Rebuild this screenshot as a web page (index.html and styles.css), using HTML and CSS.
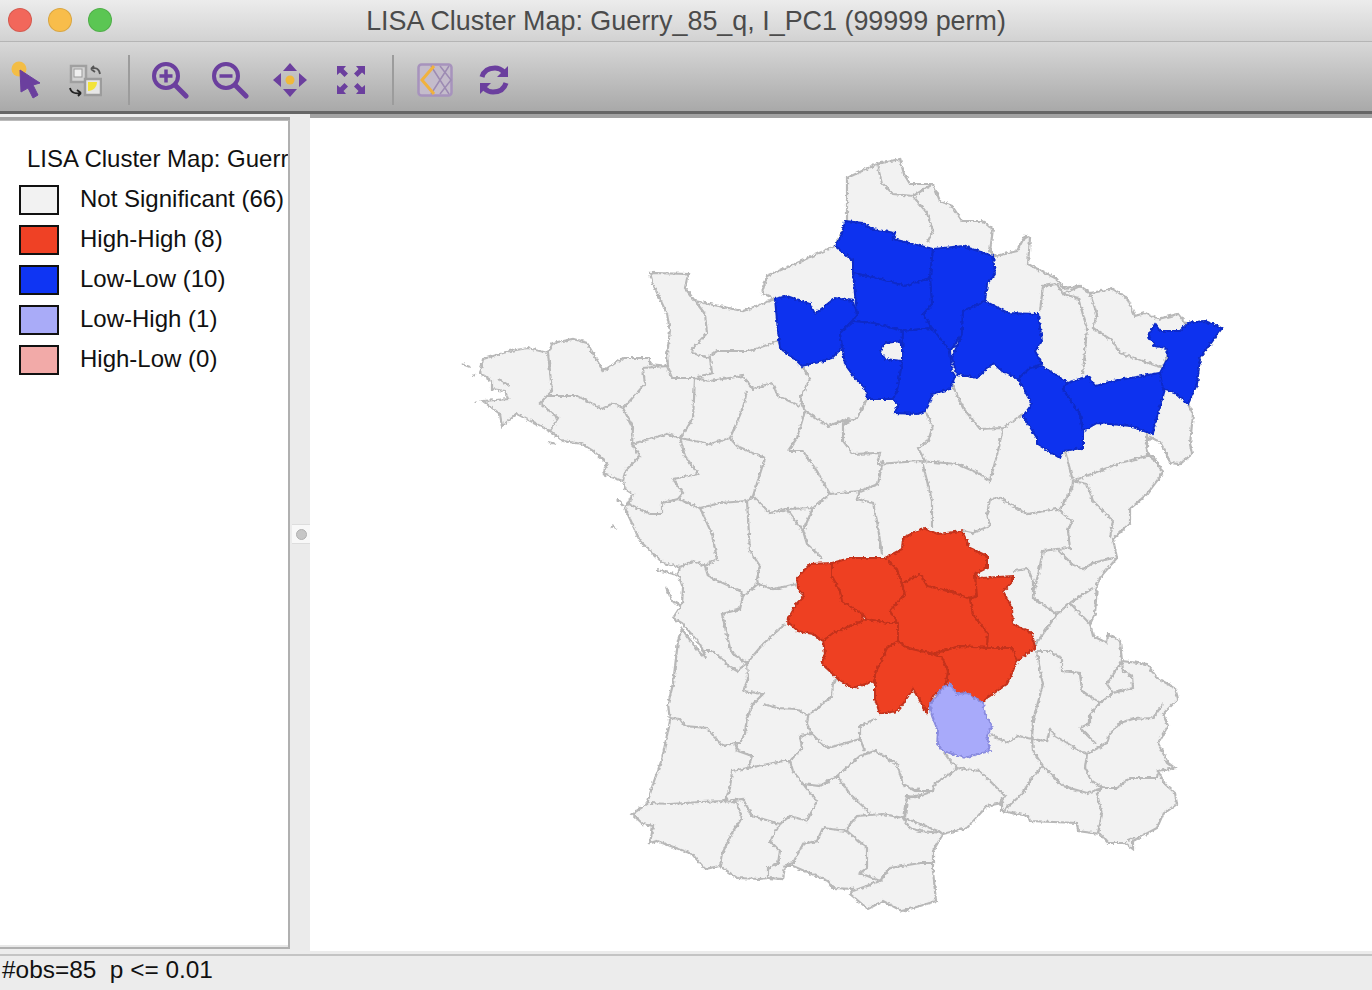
FILE: index.html
```html
<!DOCTYPE html>
<html lang="en">
<head>
  <meta charset="UTF-8">
  <title>LISA Cluster Map</title>
  <link rel="stylesheet" href="styles.css">
</head>
<body>
  <div class="window">

    <div class="titlebar">
      <div class="lights">
        <span class="light red"></span>
        <span class="light yellow"></span>
        <span class="light green"></span>
      </div>
      <div class="title">LISA Cluster Map: Guerry_85_q, I_PC1 (99999 perm)</div>
    </div>

    <div class="toolbar">
      <!-- select -->
      <svg class="tool tool-select" viewBox="0 0 32 40">
        <circle cx="8" cy="9" r="7.500" fill="#f3bd45"/>
        <path d="M9 10 L29 23 L22 25 L27 35 L22 38 L17 28 L10 32 Z" fill="#6b3f9e" stroke="#6b3f9e" stroke-linejoin="round"/>
      </svg>
      <!-- swap -->
      <svg class="tool tool-swap" viewBox="0 0 34 34">
        <rect x="3" y="2" width="15" height="16" fill="#d4d4d4" stroke="#a0a0a0" stroke-width="2.500"/>
        <rect x="6" y="5" width="8" height="8" fill="#efefef" stroke="#999"/>
        <rect x="17" y="15" width="16" height="16" fill="#e6e6e6" stroke="#9c9c9c" stroke-width="2.500"/>
        <path d="M20 27 V18 H29 C29 23 25 27 20 27 Z" fill="#f2e33a"/>
        <path d="M23 5 C27 3 31 4 32 10 M23 5 L26 2 M23 5 L27 8" fill="none" stroke="#555" stroke-width="1.800"/>
        <path d="M2 24 C3 29 8 30 13 29 M13 29 L9 26 M13 29 L10 32" fill="none" stroke="#222" stroke-width="1.800"/>
      </svg>

      <span class="sep sep-a"></span>

      <!-- zoom in -->
      <svg class="tool tool-zoom-in" viewBox="0 0 38 38">
        <circle cx="15" cy="15" r="12" fill="none" stroke="#6b3f9e" stroke-width="4"/>
        <path d="M24 24 L35 35" stroke="#6b3f9e" stroke-width="5" stroke-linecap="round"/>
        <path d="M8.500 15 H21.500 M15 8.500 V21.500" stroke="#6b3f9e" stroke-width="3.500"/>
      </svg>
      <!-- zoom out -->
      <svg class="tool tool-zoom-out" viewBox="0 0 38 38">
        <circle cx="15" cy="15" r="12" fill="none" stroke="#6b3f9e" stroke-width="4"/>
        <path d="M24 24 L35 35" stroke="#6b3f9e" stroke-width="5" stroke-linecap="round"/>
        <path d="M8.500 15 H21.500" stroke="#6b3f9e" stroke-width="3.500"/>
      </svg>
      <!-- pan -->
      <svg class="tool tool-pan" viewBox="0 0 36 36">
        <circle cx="18" cy="18" r="4.500" fill="#f0b93a"/>
        <path d="M18 1 L25 9 H11 Z M18 35 L25 27 H11 Z M1 18 L9 11 V25 Z M35 18 L27 11 V25 Z" fill="#6b3f9e"/>
      </svg>
      <!-- full extent -->
      <svg class="tool tool-fit" viewBox="0 0 30 30">
        <path d="M1 1 H10 L7.500 4 L12 8.500 L8.500 12 L4 7.500 L1 10 Z M29 1 H20 L22.500 4 L18 8.500 L21.500 12 L26 7.500 L29 10 Z M1 29 H10 L7.500 26 L12 21.500 L8.500 18 L4 22.500 L1 20 Z M29 29 H20 L22.500 26 L18 21.500 L21.500 18 L26 22.500 L29 20 Z" fill="#6b3f9e"/>
      </svg>

      <span class="sep sep-b"></span>

      <!-- base map -->
      <svg class="tool tool-map" viewBox="0 0 36 34">
        <rect x="1.500" y="1.500" width="33" height="31" rx="3" fill="#c4bccb" stroke="#a793bd" stroke-width="2.500"/>
        <path d="M14 3 L32 31 M32 3 L14 31 M23 3 L34 17 L23 31" fill="none" stroke="#9d8bb3" stroke-width="1.500"/>
        <path d="M17 3 L5 17 L17 31" fill="none" stroke="#f0b23e" stroke-width="3"/>
      </svg>
      <!-- refresh -->
      <svg class="tool tool-refresh" viewBox="0 0 32 32">
        <path d="M4 13 C6 6 12 4 17 4 C21 4 24 6 26 8" fill="none" stroke="#6b3f9e" stroke-width="5"/>
        <path d="M30 2 V13 H19 Z" fill="#6b3f9e"/>
        <path d="M28 19 C26 26 20 28 15 28 C11 28 8 26 6 24" fill="none" stroke="#6b3f9e" stroke-width="5"/>
        <path d="M2 30 V19 H13 Z" fill="#6b3f9e"/>
      </svg>
    </div>

    <div class="content">
      <div class="legend">
        <div class="legend-title">LISA Cluster Map: Guerr</div>
        <div class="legend-row"><span class="swatch sw-ns"></span>Not Significant (66)</div>
        <div class="legend-row"><span class="swatch sw-hh"></span>High-High (8)</div>
        <div class="legend-row"><span class="swatch sw-ll"></span>Low-Low (10)</div>
        <div class="legend-row"><span class="swatch sw-lh"></span>Low-High (1)</div>
        <div class="legend-row"><span class="swatch sw-hl"></span>High-Low (0)</div>
      </div>

      <div class="sash"><span class="sash-grip"><span class="sash-knob"></span></span></div>

      <div class="map">
        <svg class="map-svg" viewBox="310 117 1062 833">
          <defs>
            <filter id="rough" filterUnits="userSpaceOnUse" x="310" y="117" width="1062" height="833">
              <feTurbulence type="fractalNoise" baseFrequency="0.32" numOctaves="2" seed="4" result="noise"/>
              <feDisplacementMap in="SourceGraphic" in2="noise" scale="4" xChannelSelector="R" yChannelSelector="G"/>
              <feGaussianBlur stdDeviation="0.350"/>
            </filter>
          </defs>
          <g filter="url(#rough)">
            <!-- outline of the country -->
            <path class="land" d="M900,158 904,173 910,183 933,183 940,200 952,205 962,220 982,220 993,228 990,250 995,255 1017,250 1025,235 1030,237 1028,263 1057,278 1063,287 1080,285 1090,292 1113,288 1127,297 1135,315 1145,312 1158,318 1178,313 1185,322 1205,320 1222,327 1200,357 1197,383 1188,403 1193,413 1190,443 1192,453 1180,463 1170,462 1166,452 1160,441 1150,436 1146,445 1150,456 1158,462 1163,472 1147,493 1130,508 1130,522 1113,538 1117,557 1103,573 1097,583 1095,613 1090,623 1093,635 1107,642 1108,633 1120,640 1122,660 1147,663 1157,677 1175,687 1178,698 1163,713 1168,725 1158,742 1168,762 1175,767 1158,770 1165,783 1175,792 1177,803 1163,813 1157,827 1133,840 1133,848 1125,842 1108,842 1100,833 1078,830 1077,822 1030,820 1028,815 1002,810 1002,802 987,805 967,827 943,833 933,850 933,870 936,900 920,905 902,910 883,900 868,908 850,893 853,888 833,887 828,880 793,865 785,865 783,878 768,877 760,878 737,877 720,865 705,868 692,853 657,840 650,842 653,825 643,823 632,813 647,803 653,783 662,758 670,720 668,703 673,683 678,640 682,628 699,651 706,657 700,643 682,622 673,617 682,603 683,587 678,573 680,566 663,562 640,540 625,507 633,493 625,488 623,480 603,473 607,462 593,450 582,443 563,440 550,430 517,413 502,425 500,413 483,400 508,398 505,390 492,388 492,380 480,372 483,358 510,350 528,347 548,352 553,342 573,338 587,342 603,370 623,357 650,357 650,363 668,365 667,353 670,330 667,313 653,283 650,272 688,273 685,287 695,300 743,310 775,298 762,292 767,275 797,262 835,245 847,220 847,177 877,163 Z"/>
            <!-- islands -->
            <path class="borders" d="M462,363 470,366 M473,373 475,375 M475,400 476,401 M548,441 556,443 M612,525 616,528 M657,569 678,574 M666,586 672,600 680,604 M617,498 623,505 M498,378 510,385 M1128,839 1135,836"/>
            <!-- departement borders -->
            <path class="borders" d="M695,300 705,313 707,332 693,347 692,352 710,357 712,372 695,377 672,377 667,365
              M710,355 717,350 750,350 778,340
              M695,377 710,380 743,375 753,388 772,382 778,395 800,405
              M802,365 810,378 800,397 805,410 797,437 788,450
              M805,410 828,425 850,417 843,423 843,440 853,453 880,452 877,463
              M867,398 857,417 843,423
              M695,377 693,417 687,427 680,437 685,455 698,473 673,478 683,492 678,498 662,502 662,513 650,513 627,502
              M747,390 743,407 730,437 737,445 765,457
              M680,437 710,443 730,437
              M667,365 643,367 645,383 627,403 623,407 633,427 632,443 667,433 680,437
              M632,443 640,455 625,470 623,480
              M623,407 613,402 602,408 578,395 547,395 540,402 558,417 550,430
              M548,352 552,390 547,395
              M765,457 753,495 747,500 720,502 700,507 678,498
              M700,507 712,533 717,558 705,565 693,560 680,566
              M747,500 750,550 760,565 757,578 758,583
              M705,565 708,575 740,590 743,595 758,583 773,588 797,583
              M743,595 740,608 722,613 730,647 733,653 747,662 763,643 785,623
              M705,650 712,650 722,657 728,665 737,670 747,662 748,678 743,690 763,693 753,703 747,717 745,732 740,742 735,742 722,745 707,727 685,725 680,718 670,717
              M738,750 752,755 748,767 732,770 730,787 725,800 700,801 670,803 650,802
              M735,742 738,750
              M763,703 777,707 797,708 808,715 832,695 833,682 838,678
              M808,715 807,723 812,733 822,743 828,747 860,738 860,725 877,717
              M812,733 800,735 802,747 790,760 793,770 803,783 820,785 837,775 860,755 875,750 897,763 903,783 915,790 920,787
              M860,738 865,750
              M748,767 783,760 790,760
              M803,783 817,800 807,820 790,815 780,823 752,815 743,798 725,800
              M725,800 737,802 742,817 733,830 722,853 720,865
              M780,823 770,840 780,850 778,862 768,867 768,877
              M783,865 793,862 803,843 817,840 823,827 847,830 850,823 857,815 883,813 903,817
              M847,830 867,847 867,867 860,872 880,880 853,890
              M880,880 890,867 920,862 933,862
              M837,775 850,793 870,812
              M903,817 907,795 920,797
              M903,817 910,827 920,830 943,832
              M900,773 903,783 917,790 933,790 935,782 950,773 957,767 948,757 943,750
              M933,790 925,793 907,797 905,817 920,823 943,832
              M957,767 980,770 1005,795 1000,802
              M990,733 1007,742 1018,735 1032,738 1033,750 1043,765 1032,777 1022,793 1003,810
              M1043,765 1063,785 1087,792 1102,787 1097,793 1102,813 1098,833
              M1032,738 1047,740 1050,728 1055,735 1080,750 1087,753 1085,767 1092,780 1103,787 1117,787 1130,777 1157,777 1158,770
              M1087,753 1107,742 1110,733 1120,722 1133,718 1153,717 1163,703
              M1032,738 1033,720 1043,683 1040,670 1037,650
              M1037,650 1050,650 1062,658 1062,670 1080,672 1082,690 1100,702 1090,713 1090,722 1080,727 1095,742
              M1100,702 1113,692 1133,687 1132,675 1123,670 1122,660 1107,683 1113,692
              M1033,647 1057,613 1033,597 1043,550 1057,548 1072,563 1083,568 1093,562 1113,557
              M1057,613 1070,602 1093,587 M1070,602 1090,623
              M1013,570 1028,568 1033,580 1033,597
              M753,495 770,512 787,508 803,530 807,543 822,557
              M787,508 813,507 830,493 817,470 803,450 788,450
              M803,530 813,507
              M830,493 860,490 857,498 873,502 877,520 882,553
              M860,490 878,483 883,460
              M877,463 920,460 957,463 980,473 990,480 998,450 1003,427
              M922,460 932,500 932,527
              M963,530 972,532 990,525 987,513 990,498 1000,497 1027,513 1057,508 1072,520 1068,530 1070,547 1057,548
              M1060,508 1072,488 1073,480 1087,483 1093,500 1113,520 1110,537
              M1073,480 1065,450 1062,430
              M1073,480 1120,462 1147,455 1147,433
              M1147,455 1153,455 1163,472
              M877,163 882,182 893,193 913,195 927,212 933,230 927,242
              M913,195 933,183
              M1040,310 1043,285 1057,283 1063,293 1078,297 1087,327 1083,373
              M1063,293 1080,285
              M1090,293 1097,313 1093,327 1113,340 1120,352 1163,367 1168,353
              M1023,413 1003,427 980,428 963,407 952,383
              M925,410 933,425 928,440 918,447 925,460"/>

            <!-- Low-Low -->
            <g class="ll">
              <path d="M845,220 863,222 872,228 895,232 893,238 913,243 933,248 930,277 905,285 877,277 853,272 853,260 835,245 842,233 Z"/>
              <path d="M933,248 963,245 993,255 995,273 987,283 985,300 963,310 962,333 950,350 933,330 923,313 932,303 930,277 Z"/>
              <path d="M853,272 877,277 905,285 930,277 932,303 923,313 932,327 903,330 873,322 853,320 857,313 Z"/>
              <path d="M775,298 787,295 810,303 815,313 835,297 853,300 857,313 852,320 840,332 842,347 832,357 823,360 802,365 797,360 780,347 778,330 Z"/>
              <path fill-rule="evenodd" d="M840,332 853,320 873,322 903,330 902,363 897,390 893,398 868,398 865,387 855,377 845,363 843,350 Z M880,350 885,342 902,340 902,360 885,358 Z"/>
              <path d="M903,330 932,327 950,350 952,370 955,375 950,388 932,393 928,405 925,410 918,413 895,412 898,403 893,398 897,390 902,363 Z"/>
              <path d="M963,310 985,300 1008,312 1038,313 1042,340 1035,350 1042,363 1030,367 1018,378 1002,370 993,362 977,377 957,373 952,357 962,333 Z"/>
              <path d="M1042,365 1068,382 1063,388 1080,413 1083,430 1083,447 1063,450 1060,457 1037,443 1037,437 1023,415 1032,403 1018,378 1030,367 Z"/>
              <path d="M1068,382 1088,375 1095,385 1113,380 1160,372 1165,388 1155,423 1152,433 1130,425 1110,423 1097,422 1083,430 1080,413 1063,388 Z"/>
              <path d="M1155,323 1160,330 1180,330 1188,322 1205,320 1222,327 1200,357 1197,383 1188,403 1177,393 1163,388 1160,372 1168,357 1167,347 1155,345 1148,335 Z"/>
            </g>

            <!-- High-High -->
            <g class="hh">
              <path d="M797,577 810,563 832,562 832,575 840,590 842,600 862,613 863,620 833,632 823,640 813,633 798,630 787,620 797,602 804,595 798,588 Z"/>
              <path d="M832,562 850,557 885,557 895,563 902,583 905,593 890,610 898,622 887,622 867,618 862,613 842,600 840,590 832,575 Z"/>
              <path d="M823,640 833,632 867,618 887,622 898,622 898,640 908,647 887,647 875,673 875,680 853,687 838,678 822,663 825,652 Z"/>
              <path d="M885,557 902,548 903,537 923,527 938,533 962,530 970,547 987,555 987,567 975,573 977,595 967,597 955,592 927,585 920,573 902,583 897,568 Z"/>
              <path d="M902,583 920,573 927,585 955,592 970,598 973,613 988,633 987,647 960,645 933,653 908,647 898,640 898,622 890,610 905,593 Z"/>
              <path d="M975,573 982,577 1013,575 1013,580 1003,590 1012,607 1013,623 1032,632 1035,647 1017,660 1012,647 987,647 988,633 973,613 970,598 977,595 Z"/>
              <path d="M933,653 960,645 987,647 1012,647 1017,660 1010,677 1007,683 987,697 983,702 967,692 957,693 950,683 945,687 948,670 942,657 Z"/>
              <path d="M898,640 908,647 933,653 942,657 948,670 945,687 933,695 930,703 927,712 913,688 903,703 897,710 880,713 875,698 875,673 887,647 Z"/>
            </g>

            <!-- Low-High -->
            <path class="lh" d="M950,683 957,693 967,692 983,702 985,713 992,725 987,735 990,750 978,753 965,757 943,750 937,743 938,730 932,715 930,703 943,687 Z"/>
          </g>
        </svg>
      </div>
    </div>

    <div class="statusbar">#obs=85&nbsp;&nbsp;p &lt;= 0.01</div>
  </div>
</body>
</html>
```

FILE: styles.css
```css
/* General */
html, body {
  margin: 0;
  padding: 0;
  height: 100%;
  overflow: hidden;
  background-color: #ececec;
}

body {
  font-family: 'Liberation Sans', Arial, sans-serif;
  color: #111;
}

.window {
  display: flex;
  flex-direction: column;
  height: 990px;
}

/* Title bar */
.titlebar {
  position: relative;
  display: flex;
  align-items: center;
  justify-content: center;
  height: 41px;
  flex: none;
  background: linear-gradient(#ececec, #d2d2d2);
  border-bottom: 1px solid #b5b5b5;
}

.lights {
  position: absolute;
  left: 8px;
  top: 8px;
  display: flex;
  gap: 16px;
}

.light {
  width: 22px;
  height: 22px;
  border-radius: 50%;
  border: 1px solid rgba(0, 0, 0, 0.12);
}

.light.red { background-color: #f2675b; }
.light.yellow { background-color: #f8bd4b; }
.light.green { background-color: #5bc653; }

.title {
  margin-top: 2px;
  font-size: 26.900px;
  color: #4b4b4b;
}

/* Toolbar */
.toolbar {
  position: relative;
  height: 69px;
  flex: none;
  background: linear-gradient(#d8d8d8, #a9a9a9);
  border-bottom: 3px solid #666;
}

.tool {
  position: absolute;
  filter: blur(0.5px);
}

.tool-select { left: 11px; top: 18px; width: 32px; height: 40px; }
.tool-swap { left: 68px; top: 22px; width: 34px; height: 34px; }
.tool-zoom-in { left: 151px; top: 19px; width: 38px; height: 38px; }
.tool-zoom-out { left: 211px; top: 19px; width: 38px; height: 38px; }
.tool-pan { left: 272px; top: 20px; width: 36px; height: 36px; }
.tool-fit { left: 336px; top: 23px; width: 30px; height: 30px; }
.tool-map { left: 417px; top: 21px; width: 36px; height: 34px; }
.tool-refresh { left: 478px; top: 22px; width: 32px; height: 32px; }

.sep {
  position: absolute;
  top: 13px;
  width: 2px;
  height: 50px;
  background-color: #9c9c9c;
}

.sep-a { left: 128px; }
.sep-b { left: 392px; }

/* Main area */
.content {
  display: flex;
  flex: 1;
  min-height: 0;
  background-color: #ececec;
}

.legend {
  width: 290px;
  height: 829px;
  margin-top: 6px;
  padding-top: 18px;
  box-sizing: border-box;
  flex: none;
  overflow: hidden;
  white-space: nowrap;
  background-color: #fff;
  box-shadow: 0 -3px 0 #a3a3a3, 0 -2px 0 #e8e8e8 inset;
  border-right: 2px solid #b0b0b0;
  border-bottom: 2px solid #b0b0b0;
  border-top: 1px solid #bbb;
  font-size: 24px;
}

.legend-title {
  height: 40px;
  line-height: 40px;
  padding-left: 27px;
}

.legend-row {
  display: flex;
  align-items: center;
  height: 40px;
  padding-left: 19px;
}

.swatch {
  width: 36px;
  height: 26px;
  margin-top: 2px;
  margin-right: 21px;
  border: 2px solid #111;
  flex: none;
}

.sw-ns { background-color: #f2f2f2; }
.sw-hh { background-color: #ef4125; }
.sw-ll { background-color: #0f35f3; }
.sw-lh { background-color: #a9abf8; }
.sw-hl { background-color: #f2aaa8; }

.sash {
  position: relative;
  width: 20px;
  flex: none;
  background-color: #ebebeb;
}

.sash-grip {
  position: absolute;
  left: 2px;
  top: 410px;
  width: 18px;
  height: 18px;
  display: flex;
  align-items: center;
  justify-content: center;
  background-color: #f8f8f8;
  border-top: 1px solid #ddd;
  border-bottom: 1px solid #ddd;
}

.sash-knob {
  width: 11px;
  height: 11px;
  border-radius: 50%;
  background-color: #c6c6c6;
  border: 1px solid #b0b0b0;
  box-sizing: border-box;
}

.map {
  flex: 1;
  height: 837px;
  border-top: 4px solid #a3a3a3;
  box-sizing: border-box;
  background-color: #fff;
}

.map-svg {
  display: block;
  width: 1062px;
  height: 833px;
}

/* Map shapes */
.land {
  fill: #f2f2f2;
  stroke: #b8b8b8;
  stroke-width: 2.200;
}

.borders {
  fill: none;
  stroke: #b8b8b8;
  stroke-width: 2.200;
}

.ll path {
  fill: #0c33ef;
  stroke: #0a2bc9;
  stroke-width: 2;
}

.hh path {
  fill: #ee4024;
  stroke: #c4321a;
  stroke-width: 2;
}

.lh {
  fill: #a8aafa;
  stroke: #8a8cdf;
  stroke-width: 2;
}

/* Status bar */
.statusbar {
  height: 36px;
  line-height: 28px;
  flex: none;
  box-sizing: border-box;
  margin-top: 4px;
  padding-left: 2px;
  font-size: 24.400px;
  background-color: #ececec;
  border-top: 2px solid #c4c4c4;
}
```
